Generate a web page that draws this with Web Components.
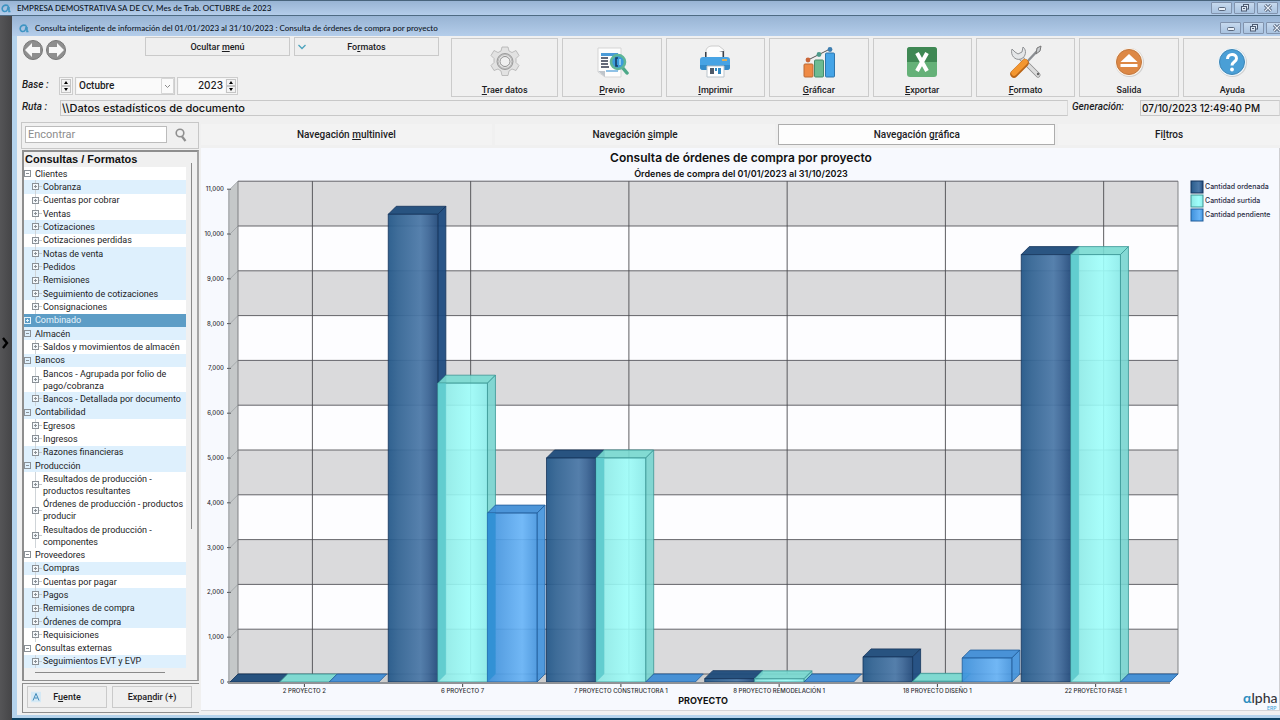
<!DOCTYPE html>
<html lang="es">
<head>
<meta charset="utf-8">
<title>Consulta inteligente</title>
<style>
  html, body { height: 100%; margin: 0; overflow: hidden; }
  body { font: 500 9px/12px Roboto, "Liberation Sans", sans-serif; color: #1c1c1e; background: #4b4b4d; }
</style>
</head>
<body>
<consulta-app></consulta-app>

<script>
  // Base: crea el shadow root con el contenido que devuelve render()
  class BaseElement extends HTMLElement {
    constructor() {
      super();
      this.attachShadow({ mode: 'open' });
    }
    connectedCallback() {
      this.shadowRoot.innerHTML = this.render();
    }
  }

  // Barra de título de ventana
  class WindowTitle extends BaseElement {
    render() {
      return `
        <style>
          :host { display: flex; align-items: center; gap: 8px; box-sizing: border-box; overflow: hidden;
            background: linear-gradient(#98b4d4, #b4cdea); font: 500 8px/12px Lato, sans-serif; color: #0c141d; }
          .logo { width: 10px; height: 9px; flex: none; }
          .text { flex: 1; white-space: nowrap; }
          .controls { display: flex; gap: 2px; flex: none; }
          button { width: 21px; height: 12px; padding: 0; border: 1px solid #8193ad; border-radius: 1px;
            background: linear-gradient(#c6d9ee, #a9c3e0); display: grid; place-items: center; }
          svg { display: block; }
        </style>
        <svg class="logo" viewBox="0 0 10 9" fill="none" stroke="#3e94c2" stroke-width="1.6"><path d="M7 1.5C3 0 1 3 1.200 5c.3 3 4 3.500 5.300.5L7.500 1.500M8 3v4.500h1.500"/></svg>
        <span class="text"><slot></slot></span>
        <div class="controls">
          <button aria-label="Minimizar"><svg width="10" height="8" viewBox="0 0 10 8"><rect x="1.500" y="3.500" width="7" height="3" rx="1" fill="#e8eff7" stroke="#59677c"/></svg></button>
          <button aria-label="Restaurar"><svg width="10" height="8" viewBox="0 0 10 8" fill="#dce7f3" stroke="#4d5b72"><rect x="3.500" y=".5" width="5" height="4.500"/><rect x="1.500" y="2.500" width="5" height="4.500"/><path d="M3 4.500h2"/></svg></button>
          <button aria-label="Cerrar"><svg width="10" height="8" viewBox="0 0 10 8" fill="none"><path d="M2 1l6 6M8 1L2 7" stroke="#4d5b72" stroke-width="3"/><path d="M2 1l6 6M8 1L2 7" stroke="#e8eff7" stroke-width="1.200"/></svg></button>
        </div>`;
    }
  }
  customElements.define('window-title', WindowTitle);

  // Botón plano con borde gris
  class FlatButton extends BaseElement {
    render() {
      return `
        <style>
          :host { display: block; }
          button { position: relative; width: 100%; height: 100%; padding: 0; border: 1px solid #cacaca; background: #efefef;
            font: inherit; color: inherit; }
          ::slotted(svg) { position: absolute; left: 3px; top: 50%; transform: translateY(-50%); }
        </style>
        <button><slot name="icon"></slot><slot></slot></button>`;
    }
  }
  customElements.define('flat-button', FlatButton);

  // Botón grande de la barra de herramientas
  class ToolButton extends BaseElement {
    render() {
      return `
        <style>
          :host { display: block; min-width: 0; }
          button { width: 100%; height: 100%; padding: 6px 0 0; border: 1px solid #cbcbcb; background: #f0f0f0;
            display: flex; flex-direction: column; align-items: center; gap: 5px; font: inherit; color: inherit; }
          ::slotted(svg) { display: block; width: 34px; height: 34px; }
        </style>
        <button><slot name="icon"></slot><span><slot></slot></span></button>`;
    }
  }
  customElements.define('tool-button', ToolButton);

  // Flechas arriba / abajo
  class SpinButtons extends BaseElement {
    render() {
      return `
        <style>
          :host { display: flex; flex-direction: column; width: 10px; }
          button { flex: 1; padding: 0; border: 1px solid #c4c4c4; background: #f3f3f3; display: grid; place-items: center; }
          svg { display: block; width: 4px; height: 3px; }
        </style>
        <button aria-label="Subir"><svg viewBox="0 0 4 3"><path d="M0 3L2 0l2 3z"/></svg></button>
        <button aria-label="Bajar"><svg viewBox="0 0 4 3"><path d="M0 0l2 3 2-3z"/></svg></button>`;
    }
  }
  customElements.define('spin-buttons', SpinButtons);

  // Campo de solo lectura con etiqueta
  class InfoField extends BaseElement {
    render() {
      return `
        <style>
          :host { display: flex; align-items: stretch; }
          label { width: var(--label-width, 38px); flex: none; font: italic 500 10px/13px Roboto, sans-serif; }
          input { flex: 1; min-width: 0; box-sizing: border-box; padding: 0 1px; border: 1px solid #c8c8c8; border-right-color: #d8d8d8;
            background: #efefef; font: var(--field-font, 500 11px/14px Inter, sans-serif); color: #111; outline: 0; }
        </style>
        <label for="field">${this.getAttribute('label')}</label>
        <input id="field" readonly value="${this.getAttribute('value')}">`;
    }
  }
  customElements.define('info-field', InfoField);

  // Pestaña de navegación
  class NavTab extends BaseElement {
    render() {
      return `
        <style>
          :host { display: block; }
          button { width: 100%; height: 100%; padding: 0; border: 0; background: #f3f3f3; font: 500 10px/14px Roboto, sans-serif; color: inherit; }
          :host([selected]) button { background: #fdfdfd; border: 1px solid #adadad; }
        </style>
        <button role="tab" aria-selected="${this.hasAttribute('selected')}"><slot></slot></button>`;
    }
  }
  customElements.define('nav-tab', NavTab);

  // Nodo del árbol. Atributos: child, shaded, selected, open, tall
  class TreeNode extends BaseElement {
    render() {
      const plus = this.hasAttribute('open') ? '' : '<path d="M3.500 2v3"/>';
      return `
        <style>
          :host { display: flex; align-items: center; flex: 1 0 13px; min-height: 0; overflow: hidden; background: #fff; white-space: nowrap; font-weight: 400; }
          :host([tall]) { flex-basis: 25px; }
          :host([child]) { padding-left: 8px; }
          :host([shaded]) { background: #def0fd; }
          :host([selected]) { background: #5d9dc6; color: #e4f3fc; }
          svg { width: 11px; height: 7px; flex: none; fill: none; stroke: #8b9197; }
          :host([selected]) svg { stroke: #e4f3fc; }
          .mark { display: flex; align-items: center; align-self: stretch; width: 11px; flex: none; }
          :host([child]) .mark { background: linear-gradient(#cfd4d8, #cfd4d8) 3px 0 / 1px 100% no-repeat; }
          :host([child]) rect { fill: #f4f8fb; }
        </style>
        <span class="mark"><svg viewBox="0 0 11 7"><rect x=".5" y=".5" width="6" height="6"/><path d="M2 3.500h3"/>${plus}${this.hasAttribute('child') ? '<path d="M7 3.500h3" stroke="#c4c9cd"/>' : ''}</svg></span>
        <slot></slot>`;
    }
  }
  customElements.define('tree-node', TreeNode);

  // Panel lateral con el árbol de consultas
  class QueryTree extends BaseElement {
    render() {
      return `
        <style>
          :host { display: grid; grid-template: 15px 1fr 12px / 1fr 11px; box-sizing: border-box; min-height: 0;
            border: 2px solid #8e8e8e; border-right-color: #a5a5a5; border-width: 2px 2px 1px 2px; background: #f0f0f0; }
          h2 { margin: 0; padding: 0 1px; font: 700 11px/15px "Liberation Sans", sans-serif; color: #101010; }
          .nodes { grid-row: 2; display: flex; flex-direction: column; min-height: 0; overflow: hidden; }
          .vbar { grid-area: 1 / 2 / 3 / 3; justify-self: center; width: 1px; height: 71%; margin-top: 11px; background: #8a8a8a; }
          .hbar { grid-row: 3; height: 1px; margin: 4px 21px 0 11px; background: #8a8a8a; }
        </style>
        <h2>Consultas / Formatos</h2>
        <div class="nodes"><slot></slot></div>
        <div class="vbar"></div>
        <div class="hbar"></div>`;
    }
  }
  customElements.define('query-tree', QueryTree);

  // Gráfica de barras con efecto 3D
  class ProjectChart extends BaseElement {
    render() {
      const series = [
        { name: 'Cantidad ordenada', front: 'url(#gDark)', top: '#1d4a7a', side: '#1d4a80', line: '#15355c', seam: '#1d4a80', alpha: .94 },
        { name: 'Cantidad surtida', front: 'url(#gTeal)', top: '#78dad2', side: '#78d5d0', line: '#3a9694', seam: '#5ccacc', alpha: .9 },
        { name: 'Cantidad pendiente', front: 'url(#gBlue)', top: '#3d8cd6', side: '#4394dc', line: '#215c99', seam: '#2f8fd4', alpha: .92 }
      ];
      const data = [
        ['2 PROYECTO 2', 0, 0, 0],
        ['6 PROYECTO 7', 10440, 6670, 3770],
        ['7 PROYECTO CONSTRUCTORA 1', 5000, 5000, 0],
        ['8 PROYECTO REMODELACIÓN 1', 75, 70, 0],
        ['18 PROYECTO DISEÑO 1', 560, 15, 535],
        ['22 PROYECTO FASE 1', 9540, 9540, 0]
      ];
      const left = 29, right = 969, base = 534, unit = 44.8, depth = 8;
      const barWidth = 49.6, step = 158.25;
      const yOf = (value) => base - value / 1000 * unit;
      let out = '';

      // Pared del fondo, bandas y ejes
      for (let i = 0; i < 11; i++) {
        const y = yOf((i + 1) * 1000) - depth;
        out += `<rect x="${left + depth}" y="${y}" width="${right - left}" height="${unit}" fill="${i % 2 ? '#fdfdff' : '#dadadc'}"/>`;
      }
      out += `<path d="M${left} ${yOf(11000)}l${depth} -${depth}V${base - depth}L${left} ${base}z" fill="#c5c8c9"/>`;
      out += `<path d="M${left - 2} ${yOf(11000)}h2V${base}h-2z" fill="#b3b6b9"/>`;
      out += `<path d="M${left} ${base}l${depth} -${depth}H${right + depth}l-${depth} ${depth}z" fill="#cdcdcd"/>`;
      for (let i = 0; i <= 11; i++) {
        const y = yOf(i * 1000);
        out += `<path d="M${left - 3} ${y}h4" stroke="#55585c"/><path d="M${left} ${y}l${depth} -${depth}" stroke="#9da1a4" stroke-width=".8"/>`;
        out += `<path d="M${left + depth} ${y - depth}H${right + depth}" stroke="#55555a" stroke-width=".9"/>`;
        out += `<text class="tick" x="23" y="${y + 2}" text-anchor="end">${i ? i + ',000' : '0'}</text>`;
      }
      data.forEach((row, i) => {
        const x = left + i * step + barWidth * 1.5;
        out += `<path d="M${x + depth} ${yOf(11000) - depth}V${base - depth}" stroke="#4c4c50" stroke-width=".9"/>`;
      });
      out += `<path d="M${left + depth} ${yOf(11000) - depth}V${base - depth}M${right + depth} ${yOf(11000) - depth}V${base - depth}" stroke="#77787c" stroke-width=".9"/>`;

      // Barras: cara superior, lateral y frontal
      data.forEach(([label, ...values], i) => {
        const start = left + i * step;
        values.forEach((value, n) => {
          const s = series[n], x = start + n * barWidth, y = yOf(value), x2 = x + barWidth;
          out += `<g stroke="${s.line}" stroke-width=".8" stroke-linejoin="round" fill-opacity="${s.alpha}">`;
          out += `<path d="M${x} ${y}l${depth} -${depth}h${barWidth}l-${depth} ${depth}z" fill="${s.top}"/>`;
          if (value) {
            out += `<path d="M${x2} ${y}l${depth} -${depth}V${base - depth}L${x2} ${base}z" fill="${s.side}"/>`;
            out += `<rect x="${x}" y="${y}" width="${barWidth}" height="${base - y}" fill="${s.front}"/>`;
          }
          out += '</g>';
          // Lateral de la barra anterior visto a través de esta
          if (n && value > 1000) {
            out += `<path d="M${x} ${y}h${depth}V${base - depth}L${x} ${base}z" fill="${s.seam}" fill-opacity=".85"/>`;
          }
        });
        const middle = start + barWidth * 1.5;
        out += `<path d="M${middle} ${base}v5" stroke="#444"/>`;
        out += `<text class="tick" x="${middle}" y="545" text-anchor="middle">${label}</text>`;
      });
      out += `<path d="M${left - 2} ${base + 1}H${right}" stroke="#8f9296" stroke-width="2"/>`;

      // Leyenda
      series.forEach((s, i) => {
        const y = 33 + i * 14;
        out += `<rect x="990" y="${y}" width="12" height="12" fill="${s.front}" stroke="${s.line}"/>`;
        out += `<text class="legend" x="1004" y="${y + 8}">${s.name}</text>`;
      });

      return `
        <style>
          :host { display: block; min-width: 0; min-height: 0; background: #f7f9fe; }
          svg { display: block; width: 100%; height: 100%; font-family: Inter, sans-serif; fill: #222; }
          .title { font-size: 12px; font-weight: 600; fill: #101010; }
          .subtitle { font-size: 9px; font-weight: 600; fill: #101010; }
          .tick { font-size: 6px; fill: #2c2c30; }
          .legend { font-size: 7px; fill: #2b2d45; }
          .axis { font-size: 9px; font-weight: 700; fill: #101010; }
          .brand { font-family: Lato, sans-serif; font-size: 14px; font-weight: 500; fill: #33343a; }
          .brand .a { fill: #2c8dc0; font-weight: 700; }
          .erp { font-size: 5px; fill: #45a3da; }
        </style>
        <svg viewBox="0 0 1078 562" role="img" aria-label="Consulta de órdenes de compra por proyecto">
          <defs>
            <linearGradient id="gDark"><stop offset="0" stop-color="#245889"/><stop offset=".2" stop-color="#346594"/><stop offset=".65" stop-color="#4c79a8"/><stop offset=".8" stop-color="#3e6898"/><stop offset="1" stop-color="#234b7c"/></linearGradient>
            <linearGradient id="gTeal"><stop offset="0" stop-color="#8ce8e4"/><stop offset=".65" stop-color="#9ffffb"/><stop offset="1" stop-color="#8becea"/></linearGradient>
            <linearGradient id="gBlue"><stop offset="0" stop-color="#3c91dc"/><stop offset=".3" stop-color="#519fe6"/><stop offset=".7" stop-color="#68b4f7"/><stop offset="1" stop-color="#4796df"/></linearGradient>
          </defs>
          <text class="title" x="540" y="14" text-anchor="middle">Consulta de órdenes de compra por proyecto</text>
          <text class="subtitle" x="540" y="29" text-anchor="middle">Órdenes de compra del 01/01/2023 al 31/10/2023</text>
          ${out}
          <text class="axis" x="502" y="556" text-anchor="middle">PROYECTO</text>
          <text class="brand" x="1042" y="555"><tspan class="a">α</tspan>lpha</text>
          <text class="erp" x="1066" y="562">ERP</text>
        </svg>`;
    }
  }
  customElements.define('project-chart', ProjectChart);

  // Ventana principal
  class ConsultaApp extends BaseElement {
    render() {
      return `
        <style>
          :host { display: grid; grid-template: 16px 1fr / 12px 1fr; height: 100vh; box-sizing: border-box; }
          .main-title { grid-column: 1 / -1; padding: 0 2px 0 1px; gap: 6px; border-top: 1px solid #48647c; border-bottom: 1px solid #4e6b83; }
          .rail { padding: 0; border: 0; background: linear-gradient(90deg, #555557, #454547); display: grid; align-items: center; justify-items: start; }
          .rail svg { width: 8px; height: 12px; margin-left: 1px; margin-bottom: 50px; }
          .window { display: grid; grid-template-rows: 20px 86px 1fr; min-height: 0; min-width: 0; background: #b5d3ec; border-bottom: 2px solid #0d4263; }
          .child-title { padding: 4px 0 0 7px; gap: 6px; margin-right: -7px; }
          header { margin-left: 5px; background: #f0f0f0; padding: 1px 0 0 5px; display: grid; grid-template-rows: 60px 16px; row-gap: 3px; }
          .top { display: grid; grid-template-columns: 429px 1fr; }
          .controls { display: grid; grid-template-rows: 19px 18px; row-gap: 21px; align-content: start; }
          .line { display: flex; align-items: stretch; }
          .arrows { display: flex; gap: 1px; width: 123px; height: 22px; padding-top: 2px; }
          .arrows button { width: 22px; height: 22px; padding: 0; border: 0; background: none; }
          .arrows svg { display: block; }
          .line flat-button { width: 145px; margin-right: 4px; }
          .base label { width: 37px; font: italic 500 10px/15px Roboto, sans-serif; }
          .box { display: flex; box-sizing: border-box; border: 1px solid #cdcdcd; background: #f5f5f5; padding: 1px; }
          .box + .box { margin-left: 2px; }
          .box select { appearance: none; width: 96px; border: 0; padding: 0 2px; font: 500 10px/14px Roboto, sans-serif; color: inherit;
            background: #fafafa; outline: 0; }
          .month { position: relative; }
          .month svg { position: absolute; right: 0; top: 0; pointer-events: none; }
          .box input { width: 46px; box-sizing: border-box; border: 0; padding: 0 2px 2px 0; text-align: right; background: #fafafa;
            font: 500 10px/12px Inter, sans-serif; color: inherit; margin-right: 1px; }
          .tools { display: grid; grid-template-columns: 107fr repeat(7, 99fr); gap: 4px; padding-top: 1px; margin-right: -2px; }
          .route { display: grid; grid-template-columns: minmax(0, 1fr) 208px; gap: 4px; }
          .route info-field:last-child { --label-width: 68px; --field-font: 500 10px/14px Inter, sans-serif; }
          .content { margin: 0 0 3px 5px; background: #f0f0f0; display: grid; grid-template: 27px 1fr / 178px 1fr; column-gap: 2px;
            padding-left: 4px; min-height: 0; }
          .search { display: flex; align-items: center; box-sizing: border-box; border: 1px solid #c7c7c7; padding: 0 3px 2px; }
          .search input { width: 142px; height: 17px; box-sizing: border-box; border: 1px solid #bcbcbc; padding: 0 2px; background: #fff;
            font: 400 11px/14px Roboto, sans-serif; outline: 0; }
          .search input::placeholder { color: #8d8d8d; opacity: 1; }
          .search button { flex: 1; padding: 0; border: 0; background: none; display: grid; place-items: center; }
          .tabs { display: grid; grid-template-columns: 291fr 281fr 277fr 222fr; gap: 3px; padding: 2px 0 4px; }
          aside { display: grid; grid-template-rows: 1fr 30px; row-gap: 2px; min-height: 0; padding: 1px 0 2px 1px; }
          .foot { display: grid; grid-template-columns: 80px 80px; gap: 5px; padding: 2px 0 4px 4px; border: solid #8e8e8e; border-width: 1px 0 1px 1px; }
          project-chart { margin-bottom: 4px; border-bottom: 1px solid #d4d4d6; border-right: 1px solid #cfcfd2; margin-top: -1px; }
        </style>

        <window-title class="main-title">EMPRESA DEMOSTRATIVA SA DE CV, Mes de Trab. OCTUBRE de 2023</window-title>
        <button class="rail" aria-label="Mostrar panel"><svg viewBox="0 0 8 12" fill="none" stroke="#000" stroke-width="2.400"><path d="M2 1l4 5-4 5"/></svg></button>

        <div class="window">
          <window-title class="child-title">Consulta inteligente de información del 01/01/2023 al 31/10/2023 : Consulta de órdenes de compra por proyecto</window-title>

          <header>
            <div class="top">
              <div class="controls">
                <div class="line">
                  <div class="arrows">
                    <button aria-label="Anterior"><svg width="22" height="22" viewBox="0 0 22 22"><circle cx="11" cy="11" r="9.500" fill="#8f8f8f" stroke="#777"/><path d="M3 11l7-7v4h8v6h-8v4z" fill="#f8f8f8"/></svg></button>
                    <button aria-label="Siguiente"><svg width="22" height="22" viewBox="0 0 22 22"><circle cx="11" cy="11" r="9.500" fill="#8f8f8f" stroke="#777"/><path d="M19 11l-7-7v4H4v6h8v4z" fill="#f8f8f8"/></svg></button>
                  </div>
                  <flat-button>Ocultar <u>m</u>enú</flat-button>
                  <flat-button><svg slot="icon" width="8" height="6" viewBox="0 0 8 6" fill="none" stroke="#4ba3bd" stroke-width="1.300"><path d="M.5 1L4 4.500 7.500 1"/></svg>Fo<u>r</u>matos</flat-button>
                </div>
                <div class="line base">
                  <label for="month">Base :</label>
                  <div class="box"><spin-buttons></spin-buttons></div>
                  <div class="box month">
                    <select id="month"><option>Octubre</option><option>Noviembre</option></select>
                    <svg width="13" height="16" viewBox="0 0 13 16" fill="none"><path d="M.5.5h12v15H.5z" stroke="#d6d6d6" fill="#fafafa"/><path d="M4 7l2.500 2.500L9 7" stroke="#8a8a8a"/></svg>
                  </div>
                  <div class="box"><input aria-label="Año" value="2023"><spin-buttons></spin-buttons></div>
                </div>
              </div>
              <div class="tools">
                <tool-button><svg slot="icon" viewBox="0 0 34 34"><g fill="#e2e2e2" stroke="#b0b0b0" stroke-width=".8" stroke-linejoin="round"><path d="M14 2h6l1 4 3 1.500 4-2 3 5-3 3v4l3 3-3 5-4-1.500-3 2-1 4.500h-6l-1-4.500-3-2-4 1.500-3-5 3-3v-4l-3-3 3-5 4 2 3-1.500z"/><circle cx="17" cy="16.500" r="8" fill="#c9c9c9" stroke="#8a8a8a"/><circle cx="17" cy="16.500" r="6.800" fill="#eee"/><circle cx="17" cy="16.500" r="5" fill="#f0f0f0" stroke="#777"/></g></svg><u>T</u>raer datos</tool-button>
                <tool-button><svg slot="icon" viewBox="0 0 34 34"><path d="M3 3h23v29H10l-7-5z" fill="#fdfdfd" stroke="#d5d5d5"/><path d="M3 26l7 6v-6z" fill="#bfc5cb"/><path d="M6 8h17v3H6z" fill="#4a9bd8"/><path d="M6 13h7M6 16h7M6 19h7M6 22h8" stroke="#31394e" stroke-width="1.300"/><path d="M11 25h12v2H11z" fill="#8fc1e6"/><path d="M27 22l5 6" stroke="#4da888" stroke-width="3.500" stroke-linecap="round"/><circle cx="23" cy="17" r="7" fill="#3b9bdc" stroke="#5fb597" stroke-width="2.600"/><path d="M23 13h-2v8h2" stroke="#173d65" stroke-width="1.600" fill="none"/><path d="M25 14v6" stroke="#a8d8f4" stroke-width="1.500"/></svg><u>P</u>revio</tool-button>
                <tool-button><svg slot="icon" viewBox="0 0 34 34"><path d="M8 14V6c0-3 3-5 6-5h7l5 4v9z" fill="#fcfcfc" stroke="#ccc"/><path d="M7 12V7h1.500v5zM24.500 12V7H21l5-1v6z" fill="#3a4049"/><path d="M5 12h24q3 0 3 3v7q0 3-3 3H5q-3 0-3-3v-7q0-3 3-3z" fill="#47a3e4"/><path d="M2 22q0 3 3 3h24q3 0 3-3v-2H2z" fill="#348bc9"/><path d="M24 14h5v2h-5z" fill="#d8ae5d"/><path d="M9 21h17v11H9z" fill="#fff" stroke="#bbc4cb"/><path d="M12 23h4v6h-4z" fill="#4d5968"/><path d="M17 23h2v3h-2zM20 23h3v6h-3z" fill="#328ac2"/></svg><u>I</u>mprimir</tool-button>
                <tool-button><svg slot="icon" viewBox="0 0 34 34"><rect x="2" y="19" width="9" height="13" rx="1" fill="#ef8a45" stroke="#ba6a37"/><rect x="12.500" y="15" width="9" height="17" rx="1" fill="#6dbb92" stroke="#468b6b"/><rect x="23.500" y="8" width="9" height="24" rx="1" fill="#45a4e7" stroke="#2f76ac"/><path d="M6 15l11-5.500L28 4" stroke="#555" fill="none"/><circle cx="6" cy="15" r="2.400" fill="#c96538"/><circle cx="17" cy="9.500" r="2.400" fill="#4c9a8a"/><circle cx="28" cy="4.500" r="2.400" fill="#3e7eb0"/></svg><u>G</u>ráficar</tool-button>
                <tool-button><svg slot="icon" viewBox="0 0 34 34"><rect x="2" y="2" width="30" height="30" rx="3" fill="#65b178"/><path d="M5 2h24q3 0 3 3v12H2V5q0-3 3-3z" fill="#3f8854"/><path d="M12 8l10 18M22 8L12 26" stroke="#fff" stroke-width="4"/></svg><u>E</u>xportar</tool-button>
                <tool-button><svg slot="icon" viewBox="0 0 34 34"><path d="M11 12l18 18" stroke="#888" stroke-width="5" stroke-linecap="round"/><path d="M11 12l18 18" stroke="#dcdcdc" stroke-width="3.600" stroke-linecap="round"/><path d="M3 4c-2 6 3 12 9 10 5-2 6-9 2-12l-1 5-4 2-3-2z" fill="#e4e6e8" stroke="#8f9194"/><circle cx="29" cy="29" r="1.200" fill="#666"/><path d="M31 3L17 18" stroke="#8b8e92" stroke-width="2.400"/><path d="M28 3l4-2-1 5-4 3z" fill="#c9cccf" stroke="#777"/><path d="M16 18L5 29" stroke="#b96518" stroke-width="7.500" stroke-linecap="round"/><path d="M16 17L5 28" stroke="#f3962f" stroke-width="5.500" stroke-linecap="round"/></svg><u>F</u>ormato</tool-button>
                <tool-button><svg slot="icon" viewBox="0 0 34 34"><circle cx="17.500" cy="17.500" r="14.500" fill="#cfcfcf"/><circle cx="17" cy="17" r="14" fill="#fbf3ea"/><circle cx="17" cy="17" r="12.500" fill="#dd8845" stroke="#c2763b"/><path d="M17 9l8.500 8h-17zM8.500 19h17v3h-17z" fill="#fff"/></svg>Salida</tool-button>
                <tool-button><svg slot="icon" viewBox="0 0 34 34"><circle cx="17.500" cy="17.500" r="14.500" fill="#cfcfcf"/><circle cx="17" cy="17" r="14" fill="#eff7fc"/><circle cx="17" cy="17" r="12.500" fill="#4a9fd6" stroke="#3d86b7"/><path d="M12.500 14c0-6 9-6 9-.5 0 3.500-4.500 3-4.500 7" fill="none" stroke="#fff" stroke-width="3"/><circle cx="17" cy="24.500" r="1.900" fill="#fff"/></svg>Ayuda</tool-button>
              </div>
            </div>
            <div class="route">
              <info-field label="Ruta :" value="\\\\Datos estadísticos de documento"></info-field>
              <info-field label="Generación:" value="07/10/2023 12:49:40 PM"></info-field>
            </div>
          </header>

          <div class="content">
            <div class="search">
              <input type="text" placeholder="Encontrar" aria-label="Encontrar">
              <button aria-label="Buscar"><svg width="12" height="14" viewBox="0 0 12 14" fill="none" stroke="#8f8f8f"><circle cx="5" cy="5" r="3.800" stroke-width="1.600"/><path d="M7 8.500l3.500 4.500" stroke-width="2.200"/></svg></button>
            </div>
            <div class="tabs" role="tablist">
              <nav-tab>Navegación <u>m</u>ultinivel</nav-tab>
              <nav-tab>Navegación <u>s</u>imple</nav-tab>
              <nav-tab selected>Navegación g<u>r</u>áfica</nav-tab>
              <nav-tab>Fi<u>l</u>tros</nav-tab>
            </div>
            <aside>
              <query-tree>
                <tree-node open>Clientes</tree-node>
                <tree-node child shaded>Cobranza</tree-node>
                <tree-node child>Cuentas por cobrar</tree-node>
                <tree-node child>Ventas</tree-node>
                <tree-node child shaded>Cotizaciones</tree-node>
                <tree-node child>Cotizaciones perdidas</tree-node>
                <tree-node child shaded>Notas de venta</tree-node>
                <tree-node child shaded>Pedidos</tree-node>
                <tree-node child shaded>Remisiones</tree-node>
                <tree-node child shaded>Seguimiento de cotizaciones</tree-node>
                <tree-node child>Consignaciones</tree-node>
                <tree-node selected>Combinado</tree-node>
                <tree-node open shaded>Almacén</tree-node>
                <tree-node child>Saldos y movimientos de almacén</tree-node>
                <tree-node open shaded>Bancos</tree-node>
                <tree-node child tall>Bancos - Agrupada por folio de<br>pago/cobranza</tree-node>
                <tree-node child shaded>Bancos - Detallada por documento</tree-node>
                <tree-node open shaded>Contabilidad</tree-node>
                <tree-node child>Egresos</tree-node>
                <tree-node child>Ingresos</tree-node>
                <tree-node child shaded>Razones financieras</tree-node>
                <tree-node open shaded>Producción</tree-node>
                <tree-node child tall>Resultados de producción -<br>productos resultantes</tree-node>
                <tree-node child tall>Órdenes de producción - productos<br>producir</tree-node>
                <tree-node child tall>Resultados de producción -<br>componentes</tree-node>
                <tree-node open>Proveedores</tree-node>
                <tree-node child shaded>Compras</tree-node>
                <tree-node child>Cuentas por pagar</tree-node>
                <tree-node child shaded>Pagos</tree-node>
                <tree-node child shaded>Remisiones de compra</tree-node>
                <tree-node child shaded>Órdenes de compra</tree-node>
                <tree-node child>Requisiciones</tree-node>
                <tree-node open>Consultas externas</tree-node>
                <tree-node child shaded>Seguimientos EVT y EVP</tree-node>
              </query-tree>
              <div class="foot">
                <flat-button><svg slot="icon" width="10" height="11" viewBox="0 0 10 11"><rect width="10" height="11" fill="#d5e9f5"/><path d="M2 9l3-7 3 7M3.500 6.500h3" fill="none" stroke="#3e88b8"/></svg>F<u>u</u>ente</flat-button>
                <flat-button>Expa<u>n</u>dir (+)</flat-button>
              </div>
            </aside>
            <project-chart></project-chart>
          </div>
        </div>`;
    }
  }
  customElements.define('consulta-app', ConsultaApp);
</script>
</body>
</html>
